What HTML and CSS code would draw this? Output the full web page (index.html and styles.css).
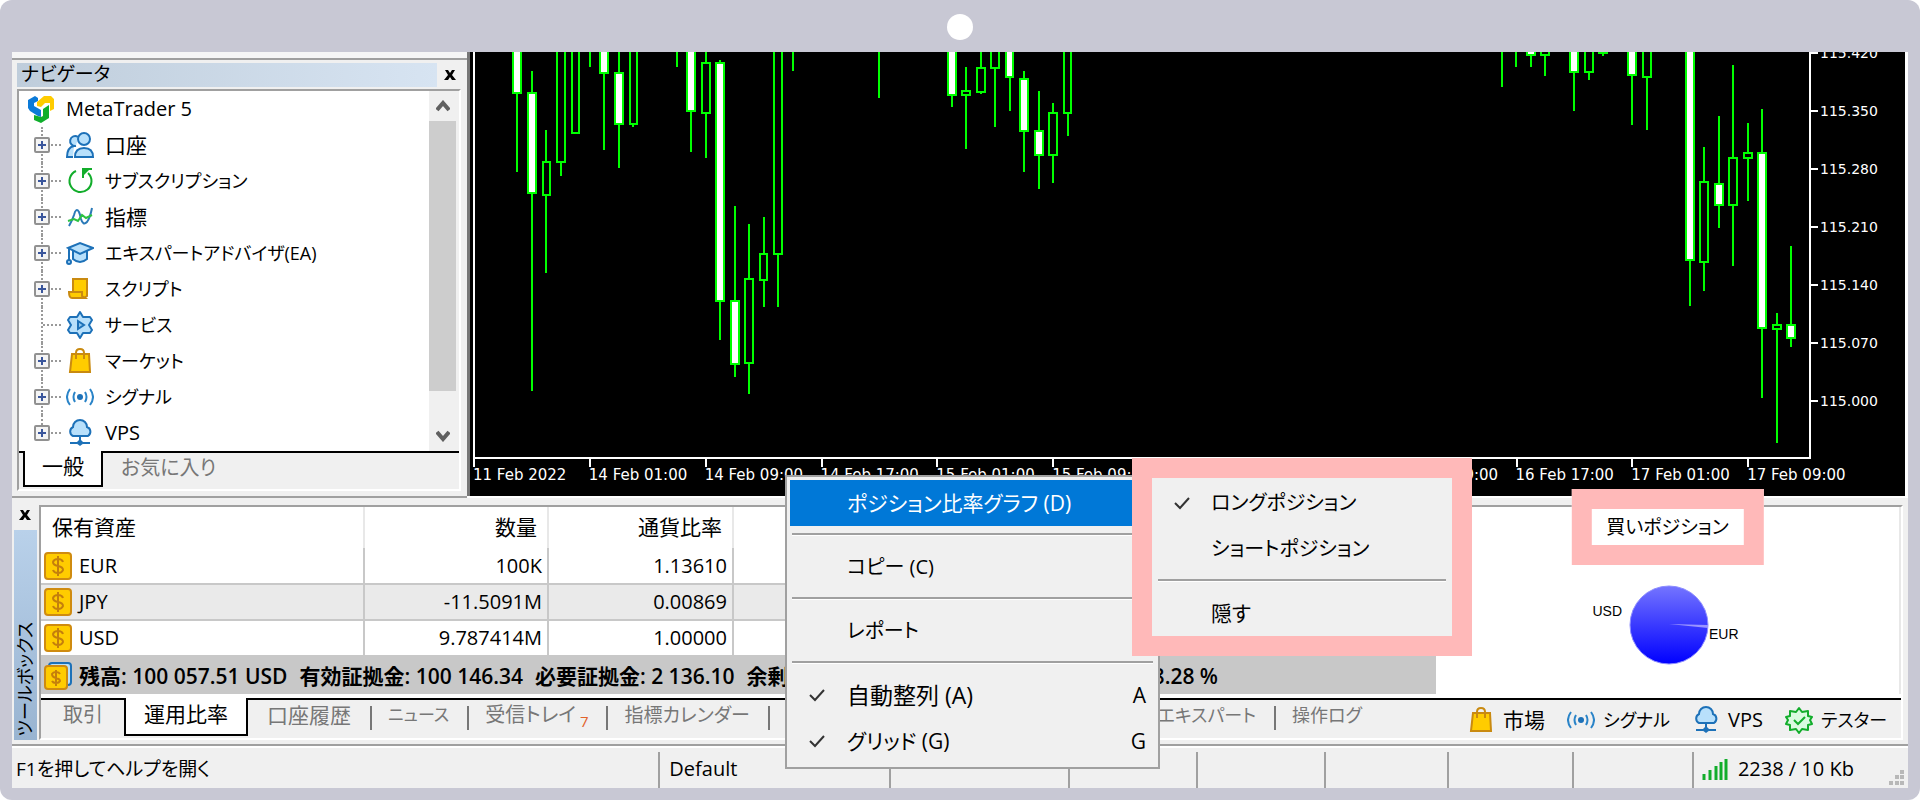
FILE: index.html
```html
<!DOCTYPE html>
<html lang="ja">
<head>
<meta charset="utf-8">
<title>MetaTrader 5</title>
<meta name="viewport" content="width=device-width, initial-scale=1">
<link rel="stylesheet" href="styles.css">
</head>
<body>
<svg class="defs" aria-hidden="true">
  <symbol id="i-mt5" viewBox="0 0 28 28">
    <path d="M1 5 8 1l3 2v3L7 8v3l7 4v7l-3-1-8-5-2-3z" fill="#0b7ad8"/>
    <path d="M10 7 17 1h7l3 3v10l-4 2V8h-5l-4 4-4-1z" fill="#fc0"/>
    <path d="m16 14 6-4v13l-8 5-7-3v-5l7 2 2-1z" fill="#0fae2c"/>
  </symbol>
  <symbol id="i-users" viewBox="0 0 28 28">
    <g fill="#b8e0fb" stroke="#1d71b8" stroke-width="2">
      <path d="M12 6a5 5 0 1 0-2 9M8 15c-5 1-7 4-7 11h6"/>
      <circle cx="18" cy="8" r="6"/>
      <path d="M9 26c0-6 3-9 9-9s9 3 9 9z"/>
    </g>
  </symbol>
  <symbol id="i-refresh" viewBox="0 0 28 28">
    <path d="M10 4A11 11 0 1 0 22 6" fill="none" stroke="#12ad2b" stroke-width="2"/>
    <path d="M26 2h-9v9" fill="none" stroke="#12ad2b" stroke-width="2"/><path d="M17 3h6l-6 6z" fill="#12ad2b"/>
  </symbol>
  <symbol id="i-indicator" viewBox="0 0 28 28">
    <path d="M3 23q3-5 5-11 2-8 5-3 1 2 2 7 2 7 6 3 3-4 5-14" fill="none" stroke="#2a7ab8" stroke-width="2"/>
    <path d="m2 18 6-2 4 2 4-6 4 3 6-3" fill="none" stroke="#2cc242" stroke-width="2"/>
  </symbol>
  <symbol id="i-expert" viewBox="0 0 28 28">
    <path d="M7 11v9q7 6 14 0v-9" fill="#b8e0fb" stroke="#1d71b8" stroke-width="2"/>
    <path d="M2 9 14 4l13 5-13 6z" fill="#b8e0fb" stroke="#1d71b8" stroke-width="2"/>
    <path d="M3 10v11" stroke="#1d71b8" stroke-width="2"/><circle cx="3" cy="23" r="2" fill="#b8e0fb" stroke="#1d71b8" stroke-width="2"/>
  </symbol>
  <symbol id="i-script" viewBox="0 0 28 28">
    <path d="M7 4h14v17l-3 2H8l-1-4z" fill="#fc0" stroke="#c98a10" stroke-width="2"/>
    <path d="M3 17h13v4l3 2H6q-3 0-3-6z" fill="#fc0" stroke="#c98a10" stroke-width="2"/>
  </symbol>
  <symbol id="i-service" viewBox="0 0 28 28">
    <path d="m14 1 3 5 7 0 2 3-3 5 3 5-2 3-7 0-3 5-3-5-7 0-2-3 3-5-3-5 2-3 7 0z" fill="#b8e0fb" stroke="#1d71b8" stroke-width="2" stroke-linejoin="round"/>
    <path d="m12 10 6 4-6 4z" fill="#8fc8ee" stroke="#1d71b8" stroke-width="2"/>
  </symbol>
  <symbol id="i-bag" viewBox="0 0 28 28">
    <path d="M10 10V6q0-4 4-4t4 4v4" fill="none" stroke="#c98a10" stroke-width="2"/>
    <path d="M6 7h17l1 18H4z" fill="#fc0" stroke="#c98a10" stroke-width="2"/>
    <path d="M10 7v5M18 7v5" stroke="#c98a10" stroke-width="2"/>
  </symbol>
  <symbol id="i-signal" viewBox="0 0 28 28">
    <circle cx="14" cy="14" r="3" fill="#1d71b8"/>
    <path d="M9 9q-3 5 0 10M19 9q3 5 0 10M4 6q-6 8 0 16M24 6q6 8 0 16" fill="none" stroke="#2a84c8" stroke-width="2"/>
  </symbol>
  <symbol id="i-cloud" viewBox="0 0 28 28">
    <path d="M7 17a5 5 0 0 1 0-9 7 7 0 0 1 14 0 5 5 0 0 1 1 9z" fill="#b8e0fb" stroke="#1d71b8" stroke-width="2"/>
    <path d="M14 17v5M4 24h7M17 24h7" stroke="#1d71b8" stroke-width="2"/><path d="m14 20 4 4-4 3-4-3z" fill="#1d71b8"/>
  </symbol>
  <symbol id="i-tester" viewBox="0 0 28 28">
    <path d="m14 2 3 4 6-1 0 5 4 1-2 3 2 4-4 1 0 5-6-1-3 4-3-4-6 1 0-5-4-1 2-4-2-3 4-1 0-5 6 1z" fill="#d9fbe0" stroke="#12ad2b" stroke-width="2" stroke-linejoin="round"/>
    <path d="m9 14 4 4 7-7" fill="none" stroke="#12ad2b" stroke-width="2"/>
  </symbol>
  <symbol id="i-coin" viewBox="0 0 28 28">
    <rect x="1" y="1" width="26" height="26" rx="3" fill="#fc0" stroke="#cf8b10" stroke-width="2"/>
    <path d="M19 10q-1-3-5-3t-5 3q0 3 5 4t5 4q-1 3-5 3t-5-3M14 4v20" fill="none" stroke="#c47f0c" stroke-width="2"/>
  </symbol>
  <symbol id="i-coins" viewBox="0 0 28 28">
    <rect x="5" y="1" width="22" height="22" rx="3" fill="#b8e0fb" stroke="#1d71b8" stroke-width="2"/>
    <rect x="1" y="4" width="22" height="23" rx="3" fill="#fc0" stroke="#cf8b10" stroke-width="2"/>
    <path d="M16 12q-1-2-4-2t-4 2q0 3 4 4t4 3q-1 2-4 2t-4-2M12 8v16" fill="none" stroke="#c47f0c" stroke-width="2"/>
  </symbol>
  <symbol id="i-check" viewBox="0 0 16 14">
    <path d="m1 7 5 5 9-10" fill="none" stroke="#333" stroke-width="2"/>
  </symbol>
  <symbol id="i-close" viewBox="0 0 12 10">
    <path d="M1 0h3l2 3 2-3h3L8 5l4 5H8L6 7l-2 3H0l4-5z" fill="#000"/>
  </symbol>
</svg>

<div class="frame">
  <div class="camera"></div>
  <main class="screen">
    <div class="upper">
      <section class="navigator">
        <div class="nav-edge"></div>
        <header class="nav-head">
          <h2 class="nav-title">ナビゲータ</h2>
          <button class="close" aria-label="閉じる"><svg width="12" height="10"><use href="#i-close"/></svg></button>
        </header>
        <div class="nav-box">
          <div class="nav-body">
            <ul class="tree">
              <li class="root"><svg class="icon"><use href="#i-mt5"/></svg><span>MetaTrader 5</span></li>
              <li><button class="plus" aria-label="展開"></button><svg class="icon"><use href="#i-users"/></svg><span class="kanji">口座</span></li>
              <li><button class="plus" aria-label="展開"></button><svg class="icon"><use href="#i-refresh"/></svg><span class="kana">サブスクリプション</span></li>
              <li><button class="plus" aria-label="展開"></button><svg class="icon"><use href="#i-indicator"/></svg><span class="kanji">指標</span></li>
              <li><button class="plus" aria-label="展開"></button><svg class="icon"><use href="#i-expert"/></svg><span class="kana">エキスパートアドバイザ(EA)</span></li>
              <li><button class="plus" aria-label="展開"></button><svg class="icon"><use href="#i-script"/></svg><span class="kana">スクリプト</span></li>
              <li class="leaf"><svg class="icon"><use href="#i-service"/></svg><span class="kana">サービス</span></li>
              <li><button class="plus" aria-label="展開"></button><svg class="icon"><use href="#i-bag"/></svg><span class="kana">マーケット</span></li>
              <li><button class="plus" aria-label="展開"></button><svg class="icon"><use href="#i-signal"/></svg><span class="kana">シグナル</span></li>
              <li class="last"><button class="plus" aria-label="展開"></button><svg class="icon"><use href="#i-cloud"/></svg><span>VPS</span></li>
            </ul>
            <div class="scrollbar">
              <button aria-label="上へ"><svg width="14" height="12"><path d="m1 10 6-7 6 7" fill="none" stroke="#606060" stroke-width="4"/></svg></button>
              <div class="thumb"></div>
              <button aria-label="下へ"><svg width="14" height="12"><path d="m1 2 6 7 6-7" fill="none" stroke="#606060" stroke-width="4"/></svg></button>
            </div>
          </div>
          <div class="nav-tabs">
            <button class="tab active">一般</button>
            <button class="tab">お気に入り</button>
          </div>
        </div>
      </section>

      <section class="chart">
        <div class="plot-row">
          <svg class="plot" viewBox="475 52 1334 406" preserveAspectRatio="xMaxYMin slice" role="img" aria-label="ローソク足チャート">
            <path class="wick" d="M517 40V172M532 71V391M546 130V273M561 160V176M590 40V67M604 70V150M619 40V168M633 122V127M677 40V67M691 110V152M706 40V158M720 60V340M735 206V377M749 224V394M764 217V307M778 250V307M793 40V71M879 40V98M952 90V107M966 67V149M981 40V94M995 60V127M1010 70V111M1024 71V172M1039 91V189M1053 103V183M1068 110V136M1502 40V87M1516 40V67M1531 50V67M1545 50V76M1574 70V111M1589 70V80M1603 50V56M1632 70V125M1647 70V130M1690 250V306M1704 147V291M1719 116V228M1733 65V266M1748 123V201M1762 109V398M1777 313V443M1791 246V347"/>
            <path class="down" d="M513 40h8V93h-8zM528 93h8V193h-8zM600 40h8V73h-8zM615 73h8V124h-8zM687 40h8V111h-8zM716 63h8V301h-8zM731 301h8V364h-8zM948 40h8V95h-8zM1006 40h7V77h-7zM1020 79h8V131h-8zM1035 131h8V155h-8zM1527 40h8V55h-8zM1570 40h8V72h-8zM1628 40h8V75h-8zM1686 40h8V260h-8zM1715 184h8V205h-8zM1758 153h8V328h-8zM1787 325h8V338h-8z"/>
            <path class="up" d="M543 162h7V195h-7zM557 40h8V162h-8zM572 40h7V133h-7zM630 40h7V124h-7zM702 63h8V113h-8zM745 279h8V363h-8zM760 254h7V280h-7zM774 40h8V254h-8zM962 91h8V95h-8zM977 68h8V92h-8zM991 40h8V68h-8zM1049 113h8V155h-8zM1064 40h7V113h-7zM1541 40h8V55h-8zM1585 40h8V72h-8zM1599 40h8V53h-8zM1643 40h8V77h-8zM1700 182h8V262h-8zM1729 158h8V205h-8zM1744 153h8V158h-8zM1773 325h8V329h-8z"/>
          </svg>
          <ol class="prices">
            <li>115.420</li><li>115.350</li><li>115.280</li><li>115.210</li><li>115.140</li><li>115.070</li><li>115.000</li>
          </ol>
        </div>
        <ol class="times">
          <li>11 Feb 2022</li><li>14 Feb 01:00</li><li>14 Feb 09:00</li><li>14 Feb 17:00</li><li>15 Feb 01:00</li><li>15 Feb 09:00</li><li>15 Feb 17:00</li><li>16 Feb 01:00</li><li>16 Feb 09:00</li><li>16 Feb 17:00</li><li>17 Feb 01:00</li><li>17 Feb 09:00</li>
        </ol>
      </section>
    </div>

    <section class="toolbox">
      <aside class="side">
        <button class="close" aria-label="閉じる"><svg width="12" height="10"><use href="#i-close"/></svg></button>
        <div class="side-bar"><span>ツールボックス</span></div>
      </aside>
      <div class="tool-main">
        <div class="tool-body">
          <table class="assets">
            <colgroup><col class="c-name"><col class="c-qty"><col class="c-rate"><col class="c-wide"><col class="c-mid"><col></colgroup>
            <thead>
              <tr><th scope="col">保有資産</th><th scope="col">数量</th><th scope="col">通貨比率</th><th></th><th></th><th></th></tr>
            </thead>
            <tbody>
              <tr><td><span class="cell"><svg class="icon"><use href="#i-coin"/></svg>EUR</span></td><td>100K</td><td>1.13610</td><td></td><td></td><td></td></tr>
              <tr><td><span class="cell"><svg class="icon"><use href="#i-coin"/></svg>JPY</span></td><td>-11.5091M</td><td>0.00869</td><td></td><td></td><td></td></tr>
              <tr><td><span class="cell"><svg class="icon"><use href="#i-coin"/></svg>USD</span></td><td>9.787414M</td><td>1.00000</td><td></td><td></td><td></td></tr>
            </tbody>
            <tfoot>
              <tr><td colspan="6"><span class="cell totals"><svg class="icon"><use href="#i-coins"/></svg><span>残高: 100 057.51 USD</span><span>有効証拠金: 100 146.34</span><span>必要証拠金: 2 136.10</span><span>余剰証拠金: 98 010.24</span><span class="level">4 688.28 %</span></span></td></tr>
            </tfoot>
          </table>
          <div class="ratio">
            <h3 class="ratio-title">買いポジション</h3>
            <figure class="pie">
              <span class="pie-usd">USD</span>
              <svg width="80" height="80" viewBox="0 0 80 80" role="img" aria-label="USD と EUR の比率">
                <defs><linearGradient id="blue" x1="0" y1="0" x2="0" y2="1"><stop offset="0" stop-color="#7474ff"/><stop offset="1" stop-color="#0000ff"/></linearGradient></defs>
                <circle cx="40" cy="40" r="39" fill="url(#blue)" stroke="#8c8cff"/>
                <path d="M40 39 79 40V43z" fill="#9a94ff"/>
              </svg>
              <span class="pie-eur">EUR</span>
            </figure>
          </div>
        </div>
        <nav class="tool-tabs">
          <button class="tab">取引</button>
          <button class="tab active">運用比率</button>
          <button class="tab kanji">口座履歴</button>
          <button class="tab small">ニュース</button>
          <button class="tab">受信トレイ<sub>7</sub></button>
          <button class="tab medium">指標カレンダー</button>
          <button class="tab kana wide">アラーム設定</button>
          <button class="tab kana wide">記事</button>
          <button class="tab kana wide">ライブラリ</button>
          <button class="tab kana">エキスパート</button>
          <button class="tab kana">操作ログ</button>
          <div class="links">
            <button class="kanji"><svg class="icon"><use href="#i-bag"/></svg>市場</button>
            <button class="kana"><svg class="icon"><use href="#i-signal"/></svg>シグナル</button>
            <button><svg class="icon"><use href="#i-cloud"/></svg>VPS</button>
            <button class="kana"><svg class="icon"><use href="#i-tester"/></svg>テスター</button>
          </div>
        </nav>
      </div>
    </section>

    <footer class="status">
      <div class="help">F1を押してヘルプを開く</div>
      <div class="profile">Default</div>
      <div></div><div></div><div></div><div></div><div></div><div></div>
      <div class="traffic">
        <svg width="26" height="22"><path d="M2 22v-6M8 22V12M14 22V8M19 22V4M24 22V1" stroke="#12ad2b" stroke-width="3"/></svg>
        <span>2238 / 10 Kb</span>
        <svg class="grip" width="16" height="16"><path d="M11 0h4v4h-4zM6 5h4v4H6zM11 5h4v4h-4zM0 11h4v4H0zM6 11h4v4H6zM11 11h4v4h-4z" fill="#b8b8b8"/></svg>
      </div>
    </footer>
  </main>

  <div class="menu context" role="menu">
    <button class="item selected" role="menuitem"><i></i><span>ポジション比率グラフ (D)</span></button>
    <hr>
    <button class="item short" role="menuitem"><i></i><span>コピー (C)</span></button>
    <hr>
    <button class="item short" role="menuitem"><i></i><span>レポート</span></button>
    <hr>
    <button class="item large" role="menuitem"><i><svg width="16" height="14"><use href="#i-check"/></svg></i><span>自動整列 (A)</span><kbd>A</kbd></button>
    <button class="item" role="menuitem"><i><svg width="16" height="14"><use href="#i-check"/></svg></i><span>グリッド (G)</span><kbd>G</kbd></button>
  </div>
  <div class="menu sub" role="menu">
    <button class="item short" role="menuitem"><i><svg width="16" height="14"><use href="#i-check"/></svg></i><span>ロングポジション</span></button>
    <button class="item short" role="menuitem"><i></i><span>ショートポジション</span></button>
    <hr>
    <button class="item" role="menuitem"><i></i><span>隠す</span></button>
  </div>
</div>
</body>
</html>
```

FILE: styles.css
```css
* { box-sizing: border-box; }
body {
  margin: 0;
  background: #fff;
  color: #000;
  font: 20px/24px "Open Sans", "Noto Sans CJK JP", sans-serif;
  font-feature-settings: "palt";
}
button {
  font: inherit;
  font-feature-settings: inherit;
  color: inherit;
  background: none;
  border: 0;
  padding: 0;
  margin: 0;
}
ul, ol { list-style: none; margin: 0; padding: 0; }
h2, h3, figure { margin: 0; font-weight: 400; }
.defs { position: absolute; width: 0; height: 0; }
.icon { width: 28px; height: 28px; flex: none; }
.small { font-size: 17px; }
.kana { font-size: 18px; }
.medium { font-size: 19px; }
.kanji { font-size: 21px; }

.frame {
  position: relative;
  min-height: 100vh;
  padding: 0 12px 12px;
  background: #c8c8d4;
  border-radius: 12px;
  display: flex;
  flex-direction: column;
}
.camera {
  width: 26px;
  height: 26px;
  margin: 14px auto 12px;
  border-radius: 50%;
  background: #fff;
}
.screen { flex: 1; display: flex; flex-direction: column; background: #f0f0f0; }
.upper { display: flex; background: #fff; }

/* Navigator */
.navigator {
  width: 455px;
  flex: none;
  background: #f0f0f0;
  border-bottom: 2px solid #a0a0a0;
}
.nav-edge { height: 8px; border-bottom: 2px solid #a0a0a0; background: #f6f6f6; }
.nav-head { display: flex; height: 24px; margin: 3px 4px 2px 5px; }
.nav-title {
  flex: 1;
  padding-left: 4px;
  font-size: 19px;
  line-height: 22px;
  background: linear-gradient(90deg, #bfcddb, #d7e4f2);
}
.close { display: grid; place-items: center; }
.nav-head .close { width: 26px; }
.nav-box {
  margin: 0 6px 4px 5px;
  border: 2px solid #fff;
  border-top-color: #a0a0a0;
  border-left-color: #a0a0a0;
}
.nav-body { display: flex; background: #fff; }
.tree { flex: 1; }
.tree li {
  position: relative;
  height: 36px;
  padding-left: 15px;
  display: flex;
  align-items: center;
  gap: 16px;
}
.tree .root { padding-left: 8px; gap: 11px; }
.tree span { margin-left: -5px; }
.tree .root span { margin-left: 0; }
.tree li:not(.root)::before {
  content: "";
  position: absolute;
  left: 22px;
  top: 0;
  height: 36px;
  border-left: 2px dotted #999;
}
.tree .last::before { height: 18px !important; }
.tree li:not(.root)::after {
  content: "";
  position: absolute;
  left: 32px;
  top: 17px;
  width: 10px;
  border-top: 2px dotted #999;
}
.tree .leaf { padding-left: 47px; }
.tree .leaf::after { left: 24px !important; width: 18px !important; }
.plus {
  position: relative;
  z-index: 1;
  width: 16px;
  height: 16px;
  border: 2px solid #919191;
  border-radius: 2px;
  background:
    linear-gradient(#3a569c, #3a569c) center / 8px 2px no-repeat,
    linear-gradient(#3a569c, #3a569c) center / 2px 8px no-repeat,
    #f4f4f4;
}
.scrollbar {
  width: 30px;
  padding-right: 3px;
  display: flex;
  flex-direction: column;
  background: #f0f0f0;
}
.scrollbar button { height: 30px; display: grid; place-items: center; }
.thumb { height: 270px; margin-bottom: auto; background: #cdcdcd; }

.tab { color: #777; white-space: nowrap; }
.tab.active {
  color: #000;
  background: #fff;
  border: 2px solid #000;
  border-top: 0;
  margin-top: -2px;
}
.nav-tabs { display: flex; height: 38px; border-top: 2px solid #000; padding-left: 4px; }
.nav-tabs .tab { padding: 0 18px 6px; }
.nav-tabs .active { height: 36px; padding: 0 17px 4px; font-size: 21px; }

/* Chart */
.chart {
  flex: 1;
  min-width: 0;
  margin: 0 3px 2px 0;
  border-left: 3px solid #777;
  padding-left: 3px;
  background: #000;
  color: #fff;
  font: 15px/20px "DejaVu Sans", sans-serif;
}
.plot-row { display: flex; height: 407px; overflow: hidden; }
.plot {
  flex: 1;
  min-width: 0;
  height: 407px;
  border: 2px solid #fff;
  border-top: 0;
}
.wick, .up, .down { stroke: #0f0; stroke-width: 2; }
.up { fill: #000; }
.down { fill: #fff; }
.prices { width: 94px; margin-top: -28px; font-size: 14px; }
.prices li { display: flex; align-items: center; gap: 2px; height: 58px; }
.prices li::before { content: ""; width: 7px; height: 2px; background: #fff; }
.times {
  display: grid;
  grid-template-columns: repeat(12, 1fr);
  height: 37px;
  margin-right: 42px;
}
.times li { white-space: nowrap; padding-top: 6px; position: relative; }
.times li::before {
  content: "";
  position: absolute;
  left: 0;
  top: 0;
  width: 2px;
  height: 8px;
  background: #fff;
}

/* Toolbox */
.toolbox {
  display: flex;
  padding: 7px 5px 4px 2px;
  border-bottom: 2px solid #a0a0a0;
}
.side { width: 23px; margin-right: 2px; display: flex; flex-direction: column; }
.side .close { height: 20px; width: 21px; margin-bottom: 5px; }
.side-bar {
  flex: 1;
  display: flex;
  align-items: flex-end;
  padding-bottom: 4px;
  background: linear-gradient(#b9d1ea, #99b4d1);
}
.side-bar span {
  font-size: 18px;
  line-height: 23px;
  white-space: nowrap;
  writing-mode: vertical-rl;
  text-orientation: sideways;
  transform: rotate(180deg);
}
.tool-main {
  flex: 1;
  min-width: 0;
  border: 2px solid #fff;
  border-top-color: #a0a0a0;
  border-left-color: #a0a0a0;
}
.tool-body {
  display: grid;
  grid-template-columns: 3fr 1fr;
  background: #fff;
  padding-bottom: 4px;
}
.assets { width: 100%; table-layout: fixed; border-collapse: collapse; }
.c-name { width: 323px; }
.c-qty { width: 184px; }
.c-rate { width: 185px; }
.c-wide { width: 441px; }
.c-mid { width: 208px; }
.assets th, .assets td { padding: 0 5px 0 3px; text-align: right; font-weight: 400; }
.assets th { height: 41px; padding: 0 10px 2px 11px; border-right: 2px solid #e8e8e8; font-size: 21px; }
.assets th:first-child, .assets td:first-child { text-align: left; }
.assets tbody td { height: 36px; border-right: 2px solid #c8c8c8; border-bottom: 2px solid #c8c8c8; }
.assets tbody tr:nth-child(2) { background: #eaeaea; }
.assets tfoot td { height: 38px; background: #c8c8c8; font-weight: 600; font-size: 21px; }
.assets tr > :last-child { border-right: 0; }
.cell { display: flex; align-items: center; gap: 7px; }
.totals { max-width: 1174px; white-space: nowrap; gap: 12px; }
.totals .icon { margin-right: -5px; }
.totals .level { margin-left: auto; }

.ratio { position: relative; border-right: 2px solid #e8e8e8; }
.ratio-title {
  position: absolute;
  left: 50%;
  top: -18px;
  transform: translateX(-50%);
  padding: 6px 15px;
  border: 20px solid #ffb9b9;
  background: #fff;
  font-size: 19px;
  white-space: nowrap;
}
.pie {
  display: grid;
  grid-template-columns: 1fr 80px 1fr;
  padding-top: 78px;
  padding-left: 3px;
  font: 14px/18px "Liberation Sans", sans-serif;
}
.pie-usd { text-align: right; padding: 17px 7px 0 0; }
.pie-eur { padding-top: 40px; }

.tool-tabs { display: flex; height: 40px; border-top: 2px solid #000; white-space: nowrap; }
.tool-tabs .tab { position: relative; padding: 0 18px 8px; }
.tool-tabs .tab:first-child { padding-left: 22px; padding-right: 21px; }
.tool-tabs .active { height: 38px; padding: 0 18px 4px; font-size: 21px; }
.tool-tabs .kanji { padding: 0 19px 8px; }
.tool-tabs .wide { padding: 0 26px 8px; }
.tool-tabs .tab:nth-child(n+4)::before {
  content: "";
  position: absolute;
  left: 0;
  top: 6px;
  width: 2px;
  height: 24px;
  background: #777;
}
.tool-tabs sub { color: #e2622a; font-size: 15px; line-height: 0; margin-left: 4px; }
.links { margin-left: auto; display: flex; gap: 22px; padding-right: 14px; }
.links button, .tool-tabs .links .kanji {
  display: flex;
  align-items: center;
  gap: 8px;
  padding: 2px 0 0;
}

/* Status bar */
.status {
  flex: 1;
  display: grid;
  grid-template-columns: 646fr 231fr 178fr 128fr 128fr 123fr 125fr 120fr 216fr;
  padding-top: 4px;
  border-top: 2px solid #fff;
}
.status div {
  display: flex;
  align-items: center;
  padding-bottom: 2px;
  border-left: 2px solid #a0a0a0;
  white-space: nowrap;
}
.status .help { border: 0; padding-left: 4px; font-size: 19px; }
.status .profile { padding-left: 9px; }
.status .traffic { padding-left: 8px; gap: 10px; }
.grip { margin: auto 3px 0 auto; }

/* Menus */
.menu { position: absolute; background: #f0f0f0; font-size: 21px; }
.context {
  left: 785px;
  top: 475px;
  width: 375px;
  padding: 3px;
  border: 2px solid #a0a0a0;
}
.sub { left: 1132px; top: 458px; width: 340px; padding: 2px 4px 0; border: 20px solid #ffb9b9; }
.item {
  display: flex;
  align-items: center;
  width: 100%;
  height: 46px;
  padding-right: 9px;
  text-align: left;
  white-space: nowrap;
}
.short { font-size: 20px; }
.large { font-size: 23px; }
.item i { width: 57px; display: flex; padding-left: 19px; }
.sub .item i { width: 55px; padding-left: 18px; }
.item span { flex: 1; }
.item kbd { font: inherit; font-size: 21px; }
.selected { background: #0078d7; color: #fff; }
.menu hr { margin: 7px 2px 8px; border: 0; height: 3px; background: #fff; border-top: 2px solid #a0a0a0; }
```
